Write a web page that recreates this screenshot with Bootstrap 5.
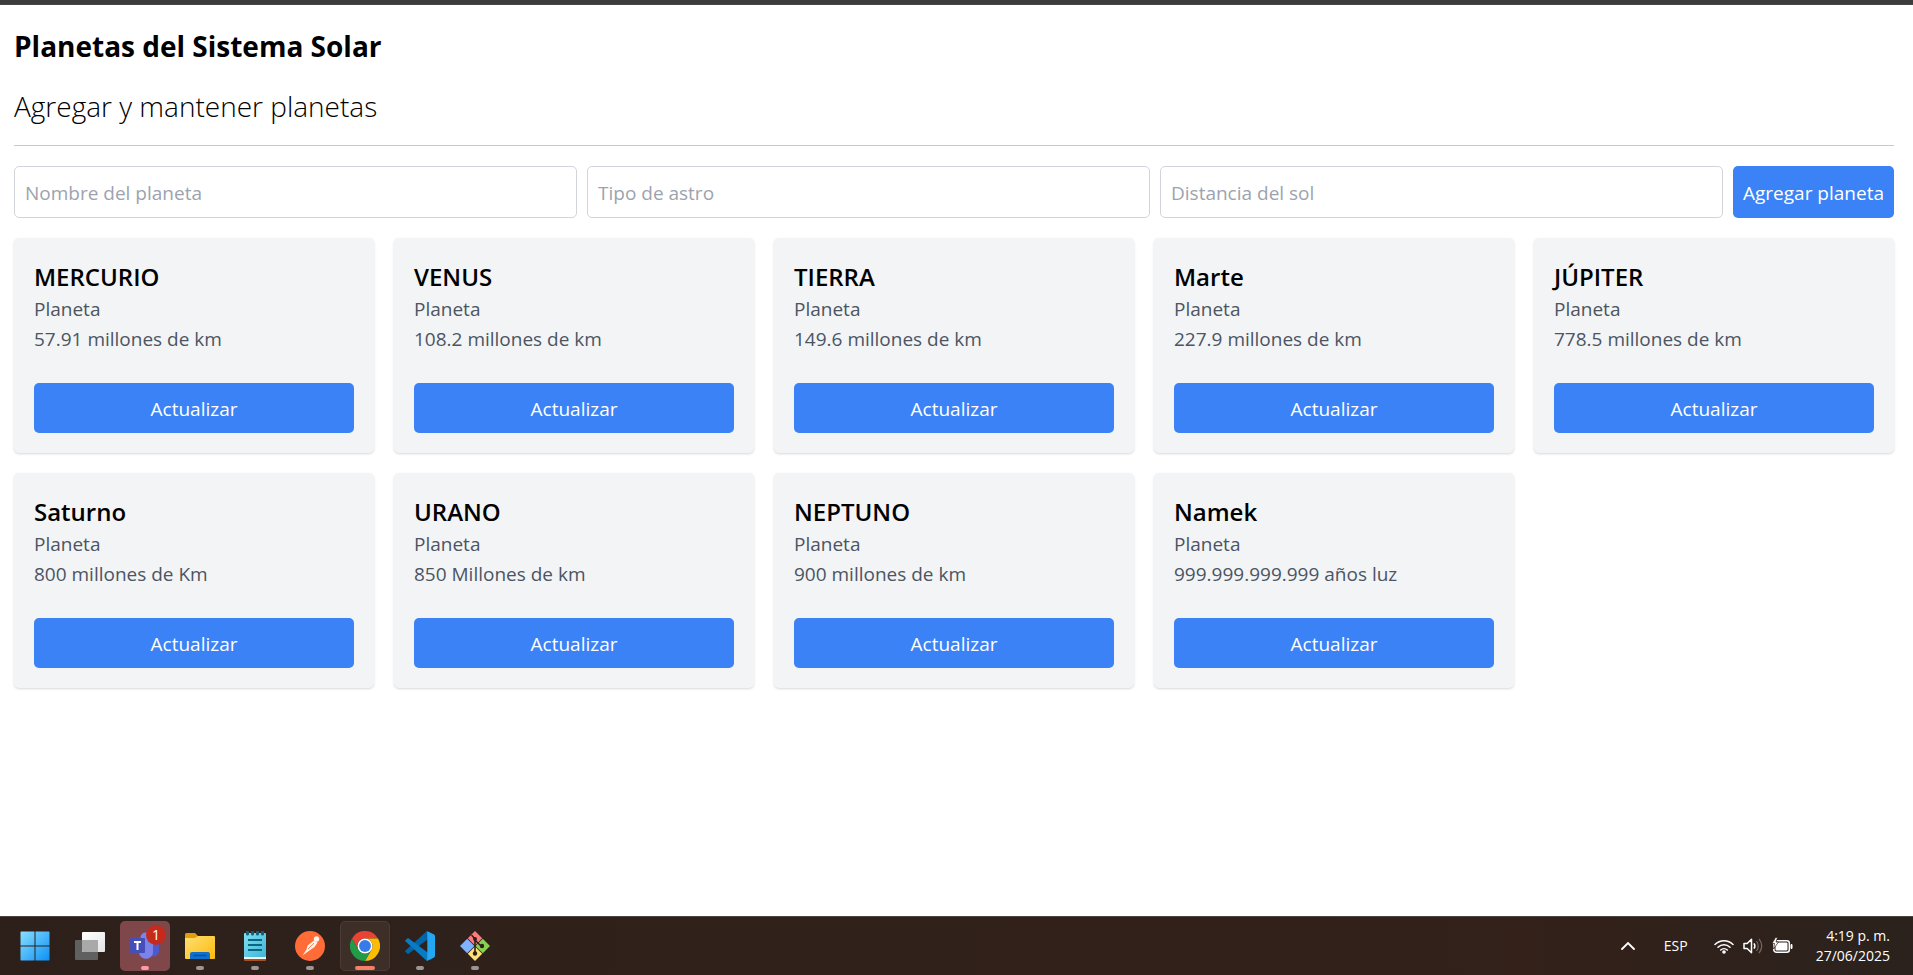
<!DOCTYPE html>
<html lang="es">
<head>
<meta charset="utf-8">
<meta name="viewport" content="width=device-width, initial-scale=1">
<title>Planetas del Sistema Solar</title>
<link href="https://cdn.jsdelivr.net/npm/bootstrap@5.3.0/dist/css/bootstrap.min.css" rel="stylesheet">
<style>
  body { font-family: "Open Sans", "Noto Sans", sans-serif; font-size: 19px; line-height: 30px; color: #000; }
  .window-edge { height: 5px; background: #3c3c3c; border-bottom: 1px solid #484848; }
  .page { padding: 21px 19px 20px 14px; }
  .page h1, .page h2 { font-size: 28px; line-height: 40px; margin: 0 0 20px; }
  .page h1 { font-weight: 700; }
  .page h2 { font-weight: 300; margin-bottom: 19px; }
  .page hr { margin: 0 0 20px; border-color: #c5cad2; opacity: 1; }
  .planet-form { gap: 10px; margin-bottom: 20px; }
  .planet-form .form-control { flex: 1 1 0; min-width: 0; height: 52px; padding: 2px 10px 0; font-size: 19px; border: 1px solid #d1d5db; border-radius: 5px; }
  .planet-form .form-control::placeholder { color: #9ca3af; opacity: 1; }
  .btn-planet { --bs-btn-bg: #3b82f6; --bs-btn-border-color: #3b82f6; --bs-btn-color: #fff; --bs-btn-hover-bg: #2563eb; --bs-btn-hover-color: #fff; --bs-btn-font-size: 19px; --bs-btn-line-height: 30px; --bs-btn-border-radius: 5px; border: 0; padding: 11px 10px 9px; }
  .planet-grid { display: grid; grid-template-columns: repeat(auto-fill, minmax(320px, 1fr)); gap: 20px; }
  .planet { background: #f3f4f6; border: 0; border-radius: 5px; padding: 21px 20px 20px; box-shadow: 0 1px 3px rgba(0,0,0,.1), 0 1px 2px rgba(0,0,0,.06); }
  .planet h3 { font-size: 24px; line-height: 35px; font-weight: 600; margin: 0; }
  .planet p { margin: 0; color: #4b5563; }
  .planet .btn { margin-top: 29px; }
  .taskbar { height: 59px; background: linear-gradient(90deg, #2d201b, #30211a 40%, #33211a 80%, #2b221d); border-top: 1px solid #4b4542; padding: 0 23px 0 10px; color: #fff; }
  .apps { gap: 5px; }
  .app { position: relative; width: 50px; height: 50px; padding: 0; border: 1px solid transparent; border-radius: 5px; background: none; display: flex; align-items: center; justify-content: center; }
  .app svg { width: 30px; height: 30px; }
  .app.alerting { background: #7f474a; }
  .app.focused { background: #3d2e28; border-color: #493b35; }
  .app.running::after { content: ""; position: absolute; bottom: 0; left: 50%; width: 8px; height: 4px; margin-left: -4px; border-radius: 2px; background: #9d9592; }
  .app.alerting::after { background: #ff99a4; }
  .app.focused::after { width: 20px; margin-left: -10px; background: #f58068; }
  .count { position: absolute; top: 3px; right: 3px; width: 20px; height: 20px; border-radius: 50%; background: #c42b1c; color: #fff; font-size: 14px; line-height: 20px; }
  .tray button { border: 0; background: none; padding: 0; color: #fff; font-size: 14px; line-height: 20px; display: flex; align-items: center; }
  .tray .lang { margin: 0 26px 0 29px; }
  .tray .status { gap: 9px; }
  .tray .clock { display: block; text-align: right; margin-left: 23px; }
</style>
</head>
<body class="d-flex flex-column min-vh-100">
<div class="window-edge"></div>
<main class="page flex-grow-1">
  <h1>Planetas del Sistema Solar</h1>
  <h2>Agregar y mantener planetas</h2>
  <hr>
  <form class="planet-form d-flex">
    <input class="form-control" type="text" placeholder="Nombre del planeta" aria-label="Nombre del planeta">
    <input class="form-control" type="text" placeholder="Tipo de astro" aria-label="Tipo de astro">
    <input class="form-control" type="text" placeholder="Distancia del sol" aria-label="Distancia del sol">
    <button class="btn btn-planet" type="button">Agregar planeta</button>
  </form>
  <section class="planet-grid">
    <article class="card planet"><h3>MERCURIO</h3><p>Planeta</p><p>57.91 millones de km</p><button class="btn btn-planet" type="button">Actualizar</button></article>
    <article class="card planet"><h3>VENUS</h3><p>Planeta</p><p>108.2 millones de km</p><button class="btn btn-planet" type="button">Actualizar</button></article>
    <article class="card planet"><h3>TIERRA</h3><p>Planeta</p><p>149.6 millones de km</p><button class="btn btn-planet" type="button">Actualizar</button></article>
    <article class="card planet"><h3>Marte</h3><p>Planeta</p><p>227.9 millones de km</p><button class="btn btn-planet" type="button">Actualizar</button></article>
    <article class="card planet"><h3>JÚPITER</h3><p>Planeta</p><p>778.5 millones de km</p><button class="btn btn-planet" type="button">Actualizar</button></article>
    <article class="card planet"><h3>Saturno</h3><p>Planeta</p><p>800 millones de Km</p><button class="btn btn-planet" type="button">Actualizar</button></article>
    <article class="card planet"><h3>URANO</h3><p>Planeta</p><p>850 Millones de km</p><button class="btn btn-planet" type="button">Actualizar</button></article>
    <article class="card planet"><h3>NEPTUNO</h3><p>Planeta</p><p>900 millones de km</p><button class="btn btn-planet" type="button">Actualizar</button></article>
    <article class="card planet"><h3>Namek</h3><p>Planeta</p><p>999.999.999.999 años luz</p><button class="btn btn-planet" type="button">Actualizar</button></article>
  </section>
</main>
<footer class="taskbar d-flex align-items-center justify-content-between">
  <nav class="apps d-flex" aria-label="Aplicaciones">
    <button class="app" type="button" aria-label="Inicio">
      <svg viewBox="0 0 30 30"><defs><linearGradient id="win" x1="0" y1="0" x2="30" y2="30" gradientUnits="userSpaceOnUse"><stop stop-color="#8be0ff"/><stop offset="1" stop-color="#0a8ff5"/></linearGradient></defs><path fill="url(#win)" d="M1 .5h13.500v14H.5V1zM15.500.5h13.500l.5.5v13.500h-14zM.5 15.500h14v14H1l-.5-.5zM15.500 15.500h14V29l-.5.500h-13.500z"/></svg>
    </button>
    <button class="app" type="button" aria-label="Vista de tareas">
      <svg viewBox="0 0 30 30"><defs><linearGradient id="tv" x1="0" y1="0" x2="1" y2="1"><stop stop-color="#fff"/><stop offset="1" stop-color="#e4e4e4"/></linearGradient></defs><rect y="9" width="23" height="20" rx="1" fill="#606060"/><rect x="7" y="1" width="23" height="20" rx="1" fill="url(#tv)"/><path fill="#a9a9a9" d="M7 9h16v12H8l-1-1z"/></svg>
    </button>
    <button class="app running alerting" type="button" aria-label="Teams">
      <svg viewBox="0 0 30 30"><circle cx="15.500" cy="6.500" r="5" fill="#7b83eb"/><path fill="#5059c9" d="M21 11h8v9c0 6-7 7-10 3z"/><path fill="#7b83eb" d="M9 11h14v10c0 9-14 9-14 0z"/><rect y="7" width="15" height="15" rx="1" fill="#464eb8"/><path d="M4 11h7M7.500 11v8" stroke="#fff" stroke-width="2" fill="none"/></svg>
      <span class="count">1</span>
    </button>
    <button class="app running" type="button" aria-label="Explorador de archivos">
      <svg viewBox="0 0 30 30"><defs><linearGradient id="fo" x1="0" y1="0" x2="1" y2="1"><stop stop-color="#ffe072"/><stop offset="1" stop-color="#fcb90d"/></linearGradient></defs><path fill="#dfa00b" d="M0 3.500Q0 2 1.500 2H10l3 3v5H0z"/><path fill="url(#fo)" d="M0 7h10l3-2h16q1 0 1 1v21q0 1-1 1H1q-1 0-1-1z"/><path fill="#0e70cd" d="M5 28v-5q0-2 2-2h16q2 0 2 2v5z"/><path d="M8.500 24.500h13" stroke="#075099" stroke-width="1.500"/></svg>
    </button>
    <button class="app running" type="button" aria-label="Bloc de notas">
      <svg viewBox="0 0 30 30"><defs><linearGradient id="no" x1="0" y1="0" x2="1" y2="1"><stop stop-color="#83def3"/><stop offset="1" stop-color="#3db6d5"/></linearGradient></defs><rect x="4" y="25" width="22" height="5" rx="1" fill="#a94f1e"/><rect x="4" y="24" width="22" height="4" fill="#f5f5f5"/><rect x="4" y="2" width="22" height="24" rx="1" fill="url(#no)"/><path d="M8 9h14M8 14h14M8 19h14" stroke="#086781" stroke-width="2"/><path d="M7.500 1v2M12.500 1v2M17.500 1v2M22.500 1v2" stroke="#125f78" stroke-width="3" stroke-linecap="round"/></svg>
    </button>
    <button class="app running" type="button" aria-label="Postman">
      <svg viewBox="0 0 30 30"><circle cx="15" cy="15" r="15" fill="#ff6c37"/><circle cx="21.500" cy="8" r="2.700" fill="#fff3ed"/><path fill="#fff0e9" d="M19 9.500l3.500 2-3 4.500-5 3.500-7 5 4-6 1-4z"/><path d="M19 12l-6 6" stroke="#ff6c37" stroke-width=".8"/></svg>
    </button>
    <button class="app running focused" type="button" aria-label="Chrome">
      <svg viewBox="0 0 48 48"><path fill="#ea4335" d="M3.200 12A24 24 0 0 1 44.800 12H24a12 12 0 0 0-10.400 18z"/><path fill="#fbbc04" d="M44.800 12A24 24 0 0 1 24 48l10.400-18A12 12 0 0 0 24 12z"/><path fill="#229b48" d="M24 48A24 24 0 0 1 3.200 12l10.400 18a12 12 0 0 0 20.800 0z"/><circle cx="24" cy="24" r="12" fill="#fff"/><circle cx="24" cy="24" r="9.500" fill="#367bea"/></svg>
    </button>
    <button class="app running" type="button" aria-label="Visual Studio Code">
      <svg viewBox="0 0 30 30"><path fill="#0065a9" d="M29 3.500 22.800.6q-1-.4-2 .4L.6 19.400q-.9.800 0 1.700l1.700 1.500q.7.600 1.500 0L28 4.500z"/><path fill="#087bc4" d="M29 26.500l-6.200 2.900q-1 .4-2-.4L.6 10.600q-.9-.8 0-1.700l1.700-1.500q.7-.6 1.500 0L28 25.500z"/><path fill="#24a7f2" d="M22.800 29.400q-1.200.4-2-.4 1.500 1 1.500-.9V1.900q0-1.900-1.500-.9.800-.8 2-.4l6.200 3q1 .5 1 1.600v19.600q0 1.100-1 1.600z"/></svg>
    </button>
    <button class="app running" type="button" aria-label="Git">
      <svg viewBox="0 0 30 30"><path fill="#ff7b7d" d="M15 0l7.200 7.200-7.200 7.200-7.200-7.200z"/><path fill="#80b3ff" d="M7.200 7.800l7.200 7.200-7.200 7.200L0 15z"/><path fill="#87d350" d="M22.800 7.800L30 15l-7.200 7.200-7.200-7.200z"/><path fill="#ffe079" d="M15 15.600l7.200 7.200L15 30l-7.200-7.200z"/><path d="M11.500 4l3.500 4v14M15 9l6 6" stroke="#2e211a" stroke-width="1.600" fill="none"/><circle cx="15" cy="8" r="2" fill="#2e211a"/><circle cx="15" cy="22.500" r="2.200" fill="#2e211a"/><circle cx="22" cy="15" r="2.200" fill="#2e211a"/></svg>
    </button>
  </nav>
  <div class="tray d-flex align-items-center">
    <button type="button" aria-label="Mostrar iconos ocultos"><svg width="14" height="10" viewBox="0 0 14 10"><path d="M1 8l6-6 6 6" fill="none" stroke="#fff" stroke-width="1.800" stroke-linecap="round"/></svg></button>
    <button class="lang" type="button">ESP</button>
    <button class="status" type="button" aria-label="Red, volumen y batería">
      <svg width="20" height="16" viewBox="0 0 20 16"><g fill="none" stroke="#fff" stroke-width="1.500" stroke-linecap="round"><path d="M1 6.500a12.500 12.500 0 0 1 18 0M4 9.300a8.500 8.500 0 0 1 12 0M6.700 12a4.700 4.700 0 0 1 6.600 0"/></g><circle cx="10" cy="14" r="1.800" fill="#fff"/></svg>
      <svg width="20" height="18" viewBox="0 0 20 18"><path d="M1 6.500h3.200L8.500 2.200v13.600L4.200 11.500H1z" fill="none" stroke="#fff" stroke-width="1.500" stroke-linejoin="round"/><path d="M11 6.300q1.800 2.700 0 5.400" fill="none" stroke="#fff" stroke-width="1.500"/><path d="M13.500 4q3.500 5 0 10M16 1.800q5.500 7.200 0 14.400" fill="none" stroke="#75665f" stroke-width="1.300"/></svg>
      <svg width="21" height="18" viewBox="0 0 21 18"><rect x="1.800" y="3.800" width="15.500" height="11.500" rx="2.500" fill="none" stroke="#fff" stroke-width="1.500"/><rect x="3.500" y="5.500" width="12" height="8" rx="1" fill="#fff"/><path d="M19 7.500h1v4h-1z" fill="#fff" stroke="#fff"/><path d="M3.500.5 0 6.500h2.500L1.500 12 6.500 5H4L5.500.5z" fill="#fff" stroke="#2e211a" stroke-width=".7"/></svg>
    </button>
    <button class="clock" type="button">4:19 p. m.<br>27/06/2025</button>
  </div>
</footer>
<script src="https://cdn.jsdelivr.net/npm/bootstrap@5.3.0/dist/js/bootstrap.bundle.min.js"></script>
</body>
</html>
